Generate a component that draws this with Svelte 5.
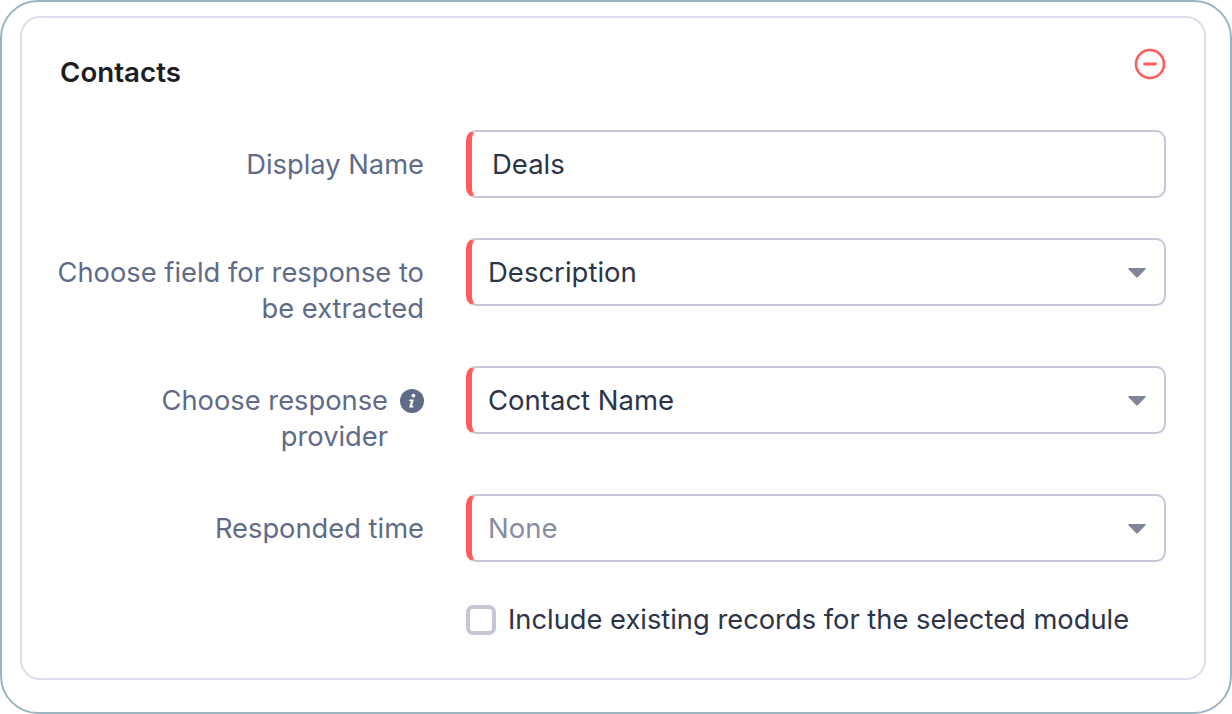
<script lang="ts">
	type Row = {
		lines: string[];
		value: string;
		kind?: 'input' | 'select';
		muted?: boolean;
		info?: boolean;
	};

	const rows: Row[] = [
		{ lines: ['Display Name'], value: 'Deals', kind: 'input' },
		{ lines: ['Choose field for response to', 'be extracted'], value: 'Description' },
		{ lines: ['Choose response', 'provider'], value: 'Contact Name', info: true },
		{ lines: ['Responded time'], value: 'None', muted: true }
	];
</script>

<div class="frame">
	<section class="card">
		<header class="card-head">
			<h2>Contacts</h2>
			<button class="remove" aria-label="Remove">
				<svg width="32" height="32" viewBox="0 0 32 32" fill="none">
					<circle cx="16" cy="16" r="14" stroke="#ff5c5c" stroke-width="2.6" />
					<path d="M10.5 16h11" stroke="#ff5c5c" stroke-width="2.8" stroke-linecap="round" />
				</svg>
			</button>
		</header>

		<div class="rows">
			{#each rows as row (row.value)}
				<div class="row">
					<div class="label">
						<span class="label-text">
							{#each row.lines as line (line)}
								<span class="line">{line}</span>
							{/each}
						</span>
						{#if row.info}
							<svg class="info" width="24" height="24" viewBox="0 0 24 24">
								<circle cx="12" cy="12" r="12" fill="#5f6b87" />
								<circle cx="13.4" cy="6.6" r="1.9" fill="#fff" />
								<path
									d="M9.6 10.4h4.2l-1.7 6.6h1.5l-.4 1.6H9.2l1.7-6.6H9.2z"
									fill="#fff"
								/>
							</svg>
						{/if}
					</div>
					<div class="field" class:text={row.kind === 'input'} class:muted={row.muted}>
						<span>{row.value}</span>
						{#if row.kind !== 'input'}
							<svg class="caret" width="18" height="11" viewBox="0 0 18 11">
								<path d="M1 1h16a.8.8 0 0 1 .6 1.3l-7.8 8a1.1 1.1 0 0 1-1.6 0l-7.8-8A.8.8 0 0 1 1 1z" fill="#80869a" />
							</svg>
						{/if}
					</div>
				</div>
			{/each}
		</div>

		<label class="check">
			<span class="box"></span>
			<span>Include existing records for the selected module</span>
		</label>
	</section>
</div>

<style>
	:global(body) {
		background: #fff;
	}
	.frame {
		box-sizing: border-box;
		width: 1232px;
		height: 714px;
		padding: 14px 24px 32px 18px;
		border: 2px solid #9ab4c0;
		border-radius: 38px;
		font-family: Inter, 'Liberation Sans', sans-serif;
		background: #fff;
	}
	.card {
		box-sizing: border-box;
		height: 664px;
		padding: 36px 38px 0 38px;
		border: 2px solid #e0deec;
		border-radius: 20px;
	}
	.card-head {
		display: flex;
		justify-content: space-between;
		align-items: flex-start;
		height: 76px;
	}
	h2 {
		margin: 0;
		font-size: 27.7px;
		line-height: 36px;
		font-weight: 600;
		color: #1c1e24;
	}
	.remove {
		display: block;
		margin: -6px 0 0;
		padding: 0;
		border: 0;
		background: none;
	}
	.rows {
		display: flex;
		flex-direction: column;
		gap: 40px;
	}
	.row {
		display: flex;
		gap: 42px;
		align-items: flex-start;
	}
	.label {
		width: 364px;
		padding-top: 17px;
		margin-bottom: -1px;
		display: flex;
		justify-content: flex-end;
		align-items: flex-start;
		gap: 12px;
		text-align: right;
		font-size: 27.3px;
		line-height: 36px;
		color: #5f6b87;
	}
	.line {
		display: block;
		white-space: nowrap;
	}
	.info {
		flex: none;
		margin-top: 6px;
	}
	.field {
		box-sizing: border-box;
		flex: 1;
		height: 68px;
		display: flex;
		align-items: center;
		justify-content: space-between;
		padding: 0 18px 0 16px;
		background: #fff;
		border: 2px solid #c8c6d6;
		border-left: 6px solid #ff5c5c;
		border-radius: 10px;
		font-size: 27.5px;
		color: #2c3448;
	}
	.field.text {
		padding-left: 20px;
	}
	.field.muted {
		color: #878da0;
	}
	.check {
		display: flex;
		align-items: center;
		gap: 12px;
		margin: 40px 0 0 406px;
		height: 36px;
		font-size: 27.3px;
		line-height: 36px;
		color: #2c3448;
	}
	.box {
		box-sizing: border-box;
		width: 30px;
		height: 30px;
		border: 4px solid #c8c6d6;
		border-radius: 7px;
	}
</style>
